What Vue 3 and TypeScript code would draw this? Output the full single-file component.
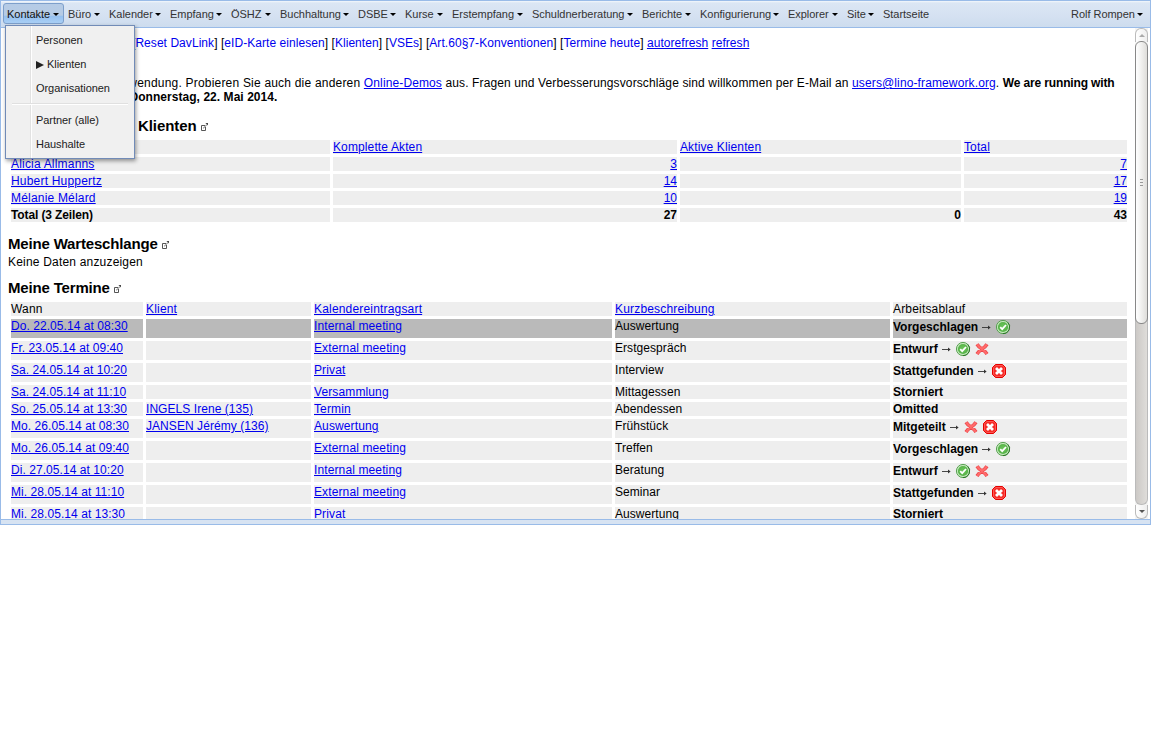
<script setup lang="ts">
type Icon = 'accept' | 'cross' | 'stop'

interface Appointment {
  when: string
  client: string
  kind: string
  summary: string
  state: string
  actions: Icon[]
}

const menus: string[] = [
  'Kontakte', 'Büro', 'Kalender', 'Empfang', 'ÖSHZ', 'Buchhaltung', 'DSBE', 'Kurse',
  'Erstempfang', 'Schuldnerberatung', 'Berichte', 'Konfigurierung', 'Explorer', 'Site',
]

const quickLinks: string[] = [
  'Reset DavLink', 'eID-Karte einlesen', 'Klienten', 'VSEs', 'Art.60§7-Konventionen', 'Termine heute',
]

const agents = [
  { name: 'Alicia Allmanns', complete: 3, total: 7 },
  { name: 'Hubert Huppertz', complete: 14, total: 17 },
  { name: 'Mélanie Mélard', complete: 10, total: 19 },
]

const appointments: Appointment[] = [
  { when: 'Do. 22.05.14 at 08:30', client: '', kind: 'Internal meeting', summary: 'Auswertung', state: 'Vorgeschlagen', actions: ['accept'] },
  { when: 'Fr. 23.05.14 at 09:40', client: '', kind: 'External meeting', summary: 'Erstgespräch', state: 'Entwurf', actions: ['accept', 'cross'] },
  { when: 'Sa. 24.05.14 at 10:20', client: '', kind: 'Privat', summary: 'Interview', state: 'Stattgefunden', actions: ['stop'] },
  { when: 'Sa. 24.05.14 at 11:10', client: '', kind: 'Versammlung', summary: 'Mittagessen', state: 'Storniert', actions: [] },
  { when: 'So. 25.05.14 at 13:30', client: 'INGELS Irene (135)', kind: 'Termin', summary: 'Abendessen', state: 'Omitted', actions: [] },
  { when: 'Mo. 26.05.14 at 08:30', client: 'JANSEN Jérémy (136)', kind: 'Auswertung', summary: 'Frühstück', state: 'Mitgeteilt', actions: ['cross', 'stop'] },
  { when: 'Mo. 26.05.14 at 09:40', client: '', kind: 'External meeting', summary: 'Treffen', state: 'Vorgeschlagen', actions: ['accept'] },
  { when: 'Di. 27.05.14 at 10:20', client: '', kind: 'Internal meeting', summary: 'Beratung', state: 'Entwurf', actions: ['accept', 'cross'] },
  { when: 'Mi. 28.05.14 at 11:10', client: '', kind: 'External meeting', summary: 'Seminar', state: 'Stattgefunden', actions: ['stop'] },
  { when: 'Mi. 28.05.14 at 13:30', client: '', kind: 'Privat', summary: 'Auswertung', state: 'Storniert', actions: [] },
]
</script>

<template>
  <div class="viewport">
    <svg class="defs" width="0" height="0">
      <defs>
        <radialGradient id="green" cx=".5" cy=".45" r=".6">
          <stop offset="0" stop-color="#6cc45c" />
          <stop offset="1" stop-color="#52b044" />
        </radialGradient>
        <symbol id="accept" viewBox="0 0 16 16">
          <circle cx="8" cy="8" r="6.6" fill="#c4e6bc" stroke="#4c9a45" stroke-width=".9" />
          <circle cx="8" cy="8" r="5.1" fill="url(#green)" />
          <path d="M12.7 3.3A6.6 6.6 0 0 1 8 14.6" fill="none" stroke="#2b7827" stroke-width="1" />
          <path d="M5.2 8.2l2 2 3.8-4.2" fill="none" stroke="#fff" stroke-width="1.8" />
        </symbol>
        <symbol id="cross" viewBox="0 0 16 16">
          <path d="M3 3.2q2 3 5 4.8q3 2 5 5M13 3.2q-2 3-5 4.8q-3 2-5 5" fill="none" stroke="#ea4448" stroke-width="3.6" />
          <path d="M3.2 3.4q2 3 4.8 4.6q3 2 4.8 4.8M12.8 3.4q-2 3-4.8 4.6q-3 2-4.8 4.8" fill="none" stroke="#ff6b6b" stroke-width="2.2" />
        </symbol>
        <symbol id="stop" viewBox="0 0 16 16">
          <path d="M4.5 1.5h7l3 3v7l-3 3h-7l-3-3v-7z" fill="#f62b27" stroke="#e60000" />
          <path d="M4.8 2.5h6.4l2.3 2.3v6.4l-2.3 2.3H4.8l-2.3-2.3V4.8z" fill="none" stroke="#ff7770" stroke-width=".6" />
          <path d="M5 5l6 6M11 5l-6 6" fill="none" stroke="#fff" stroke-width="2.8" />
        </symbol>
        <symbol id="detach" viewBox="0 0 8 8">
          <path d="M4 2.5H.5v5h4V4" fill="none" stroke="#555" />
          <path d="M2 5h1V4h1V3h1V2h1" fill="none" stroke="#888" stroke-width=".8" />
          <path d="M4.4 0H7v2.6z" fill="#444" />
        </symbol>
      </defs>
    </svg>

    <header class="toolbar">
      <nav class="menus">
        <button v-for="(m, i) in menus" :key="m" :class="{ open: i === 0 }">{{ m }}<i class="caret" /></button>
        <button>Startseite</button>
      </nav>
      <button class="user">Rolf Rompen<i class="caret" /></button>
    </header>

    <div class="body">
      <main class="content">
        <p class="links">
          <template v-for="l in quickLinks" :key="l">[<a class="plain">{{ l }}</a>] </template><a>autorefresh</a> <a>refresh</a>
        </p>
        <p class="intro">
          <span class="opening"><span class="lead">Anwendung.</span> Probieren Sie auch die anderen </span><a>Online-Demos</a> aus. Fragen und Verbesserungsvorschläge sind willkommen per E-Mail an <a>users@lino-framework.org</a>. <b>We are running with</b><br>
          <b class="date"><span class="lead today">Donnerstag,</span> 22. Mai 2014.</b>
        </p>

        <h2 class="first">Klienten <svg class="detach"><use href="#detach" /></svg></h2>
        <table class="agents">
          <colgroup><col class="a1"><col class="a2"><col class="a3"><col class="a4"></colgroup>
          <tbody>
            <tr><td></td><td><a>Komplette Akten</a></td><td><a>Aktive Klienten</a></td><td><a>Total</a></td></tr>
            <tr v-for="a in agents" :key="a.name">
              <td class="name"><a>{{ a.name }}</a></td>
              <td class="num"><a>{{ a.complete }}</a></td>
              <td></td>
              <td class="num"><a>{{ a.total }}</a></td>
            </tr>
            <tr class="sum"><td>Total (3 Zeilen)</td><td class="num">27</td><td class="num">0</td><td class="num">43</td></tr>
          </tbody>
        </table>

        <h2>Meine Warteschlange <svg class="detach"><use href="#detach" /></svg></h2>
        <p class="empty">Keine Daten anzuzeigen</p>

        <h2>Meine Termine <svg class="detach"><use href="#detach" /></svg></h2>
        <table class="dates">
          <colgroup><col class="d1"><col class="d2"><col class="d3"><col class="d4"><col class="d5"></colgroup>
          <tbody>
            <tr class="head"><td>Wann</td><td><a>Klient</a></td><td><a>Kalendereintragsart</a></td><td><a>Kurzbeschreibung</a></td><td>Arbeitsablauf</td></tr>
            <tr v-for="(r, i) in appointments" :key="r.when" :class="{ tall: r.actions.length, today: i === 0 }">
              <td><a>{{ r.when }}</a></td>
              <td><a>{{ r.client }}</a></td>
              <td class="kind"><a>{{ r.kind }}</a></td>
              <td>{{ r.summary }}</td>
              <td>
                <div class="flow">
                  <b>{{ r.state }}</b>
                  <template v-if="r.actions.length">
                    <svg class="arrow" viewBox="0 0 9 5"><path d="M0 2.5h7" stroke="#333" stroke-width=".9" /><path d="M6 .6L8.6 2.5 6 4.4z" fill="#333" /></svg>
                    <svg v-for="a in r.actions" :key="a" class="act"><use :href="'#' + a" /></svg>
                  </template>
                </div>
              </td>
            </tr>
          </tbody>
        </table>
      </main>

      <aside class="scroll">
        <div class="up"><i /></div>
        <div class="thumb"><i /><i /><i /></div>
        <div class="track" />
        <div class="down"><i /></div>
      </aside>
    </div>
    <footer class="strip" />

    <div class="dropdown">
      <div class="item">Personen</div>
      <div class="item"><svg class="play" viewBox="0 0 8 8"><path d="M0 0l8 4-8 4z" fill="#222" /></svg>Klienten</div>
      <div class="item">Organisationen</div>
      <div class="sep" />
      <div class="item">Partner (alle)</div>
      <div class="item">Haushalte</div>
    </div>
  </div>
</template>

<style>
html, body { margin: 0; background: #fff; }
</style>

<style scoped>
.viewport {
  position: relative;
  box-sizing: border-box;
  width: 1151px;
  height: 525px;
  border: 1px solid #99bbe8;
  font: 12px/14px "Liberation Sans", Arial, sans-serif;
  color: #000;
  white-space: nowrap;
  display: flex;
  flex-direction: column;
}
.defs { position: absolute; }
.toolbar {
  box-sizing: border-box;
  height: 27px;
  flex: none;
  display: flex;
  justify-content: space-between;
  padding: 2px 3px 2px 2px;
  border-bottom: 1px solid #99bbe8;
  background: linear-gradient(#f3f7fc 0, #dbe6f4 2px, #d6e2f2 50%, #cddcee);
}
.menus {
  display: grid;
  grid-template-columns: 61px 41px 61px 61px 49px 78px 47px 47px 80px 110px 58px 88px 59px 36px 60px;
}
button {
  box-sizing: border-box;
  height: 21px;
  margin: 0;
  padding: 1px 0 0 3px;
  border: 1px solid transparent;
  border-radius: 3px;
  background: none;
  font: 11px/19px "Liberation Sans", Arial, sans-serif;
  letter-spacing: -.03px;
  color: #333;
  text-align: left;
  display: flex;
}
.open {
  width: 61px;
  border-color: #7d9fcb;
  color: #111;
  background: linear-gradient(#b5cbe6 0, #b6cbe4 60%, #94bfef 62%, #a9cff5);
}
.user { width: 80px; }
.caret {
  width: 0;
  height: 0;
  margin: 8px 4px 0 auto;
  border: solid transparent;
  border-width: 3px 3px 0;
  border-top-color: #000;
}
.user .caret { margin-right: 3px; }
.body { height: 491px; flex: none; display: flex; overflow: hidden; }
.content { width: 1127px; height: 491px; padding-left: 7px; overflow: hidden; }
p, h2 { margin: 0; }
a { color: #00e; text-decoration: underline; }
.plain { text-decoration: none; }
.links { padding: 8px 0 0 124px; height: 32px; letter-spacing: .055px; }
.intro { height: 28px; margin-top: 8px; letter-spacing: .12px; }
.intro .opening { letter-spacing: .2px; }
.intro a { letter-spacing: .12px; }
.intro b { letter-spacing: -.14px; }
.intro .date { letter-spacing: .05px; }
.lead { display: inline-block; width: 174px; text-align: right; }
.today.lead { width: 192px; }
h2 { font-size: 15px; line-height: 18px; height: 18px; margin-top: 10px; letter-spacing: -.17px; }
.first { margin-top: 13px; padding-left: 130px; letter-spacing: -.08px; }
.detach { width: 8px; height: 8px; }
.empty { margin-top: 2px; letter-spacing: .19px; }
table { table-layout: fixed; width: 1122px; margin-top: 2px; border-spacing: 3px; border-collapse: separate; letter-spacing: .06px; }
td { padding: 0; height: 14px; background: #eee; vertical-align: top; }
.agents { letter-spacing: .12px; }
.agents .name { letter-spacing: .19px; }
.agents .num { text-align: right; letter-spacing: 0; }
.sum { font-weight: bold; letter-spacing: -.12px; }
.kind { letter-spacing: .12px; }
.head { letter-spacing: .18px; }
.head td:last-child { letter-spacing: .18px; }
.a1 { width: 319px; } .a2 { width: 344px; } .a3 { width: 281px; } .a4 { width: 163px; }
.d1 { width: 132px; } .d2 { width: 165px; } .d3 { width: 298px; } .d4 { width: 275px; } .d5 { width: 234px; }
.tall td { height: 19px; }
tr.today td { background: #bababa; }
.flow { display: flex; height: 14px; letter-spacing: 0; }
.tall .flow { height: 16px; line-height: 16px; }
.arrow { width: 9px; height: 5px; margin: 6px 4px 0 4px; }
.act { width: 16px; height: 16px; margin-right: 3px; }
.scroll { width: 13px; height: 491px; flex: none; display: flex; flex-direction: column; background: #f4f4f3; }
.up, .down {
  box-sizing: border-box;
  border: 1px solid #bbb;
  border-radius: 6px 6px 0 0;
  background: linear-gradient(90deg, #fff, #eee);
  padding: 5px 0 0 2.5px;
}
.up { height: 14px; border-bottom: 0; }
.up i, .down i { display: block; width: 0; height: 0; border: solid transparent; border-width: 0 3px 3px; border-bottom-color: #aaa; }
.thumb {
  position: relative;
  box-sizing: border-box;
  height: 283px;
  margin-top: -1px;
  border: 1px solid #888;
  border-radius: 6px;
  background: linear-gradient(90deg, #fff, #f5f5f4 35%, #deddda);
  display: flex;
  flex-direction: column;
  align-items: center;
  justify-content: center;
  gap: 2px;
}
.thumb i { width: 3px; height: 1px; background: #999; }
.track {
  height: 186px;
  margin-top: -6px;
  border: solid #bbb;
  border-width: 0 1px 1px;
  border-radius: 0 0 6px 6px;
  background: linear-gradient(90deg, #ccc9c6, #dfddda);
}
.down { height: 14px; border-top: 0; border-radius: 0 0 6px 6px; padding-top: 5px; }
.down i { border-width: 3px 3px 0; border-bottom-color: transparent; border-top-color: #555; }
.strip { height: 4px; border-top: 1px solid #99bbe8; background: #d7e3f2; }
.dropdown {
  position: absolute;
  left: 4px;
  top: 24px;
  box-sizing: border-box;
  width: 130px;
  height: 134px;
  padding: 2px;
  border: 1px solid #718bb7;
  background: linear-gradient(90deg, transparent 24px, #e2e2e2 24px, #e2e2e2 25px, #fff 25px, #fff 26px, transparent 26px) #f0f0f0;
  box-shadow: 1px 2px 4px rgba(0, 0, 0, .4);
  font-size: 11px;
  line-height: 24px;
  letter-spacing: -.05px;
  color: #222;
}
.item { height: 24px; padding-left: 28px; display: flex; }
.play { width: 8px; height: 8px; margin: 9px 3px 0 0; }
.sep { height: 1px; margin: 3px 4px; border-top: 1px solid #e0e0e0; background: #fff; }
</style>
